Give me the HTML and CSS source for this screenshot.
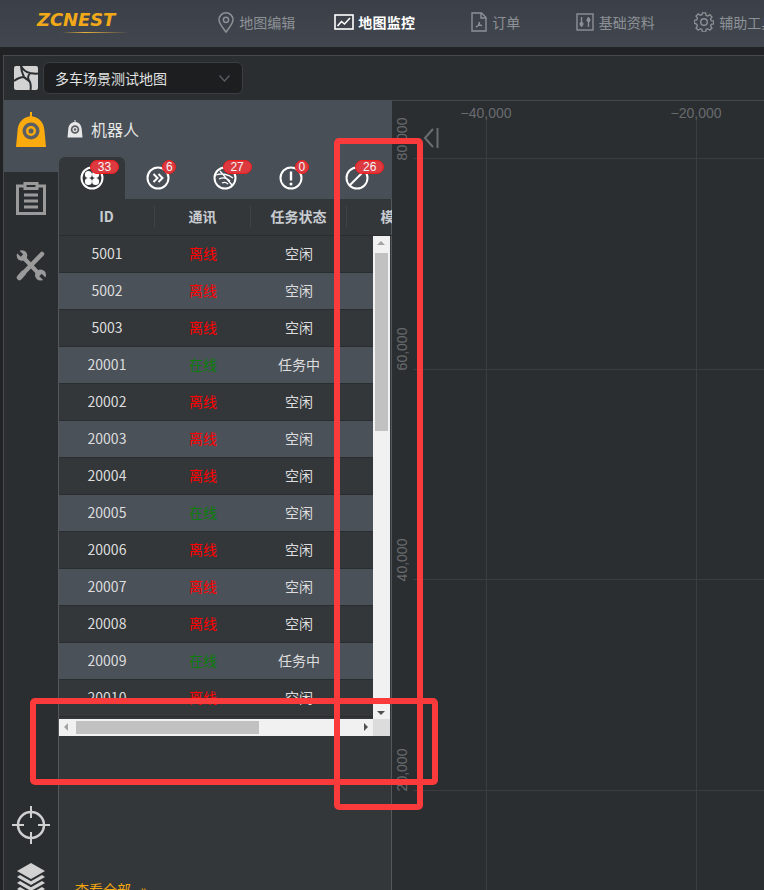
FILE: index.html
```html
<!DOCTYPE html>
<html lang="zh-CN">
<head>
<meta charset="utf-8">
<title>地图监控</title>
<link rel="stylesheet" href="styles.css">
</head>
<body>
<svg class="defs" width="0" height="0" aria-hidden="true">
  <symbol id="robot" viewBox="0 0 30 36">
    <path fill="currentColor" d="M14 0h2v4.200C24 5.500 28 11 28.500 19L30 35H0L1.500 19C2 11 6 5.500 14 4.200Z"/>
    <circle cx="15" cy="19" r="8.500" fill="#5b5f63"/>
    <circle cx="15" cy="19" r="5" fill="currentColor"/>
    <circle cx="15" cy="19" r="2.500" fill="#5b5f63"/>
  </symbol>
</svg>

<header class="topbar">
  <div class="logo">
    <span class="logo-text">ZCNEST</span>
    <span class="logo-line"></span>
  </div>
  <nav class="nav">
    <a class="nav-item">
      <svg width="16" height="21" viewBox="0 0 16 21" fill="none" stroke="currentColor" stroke-width="1.500"><path d="M8 20C4 14.500 1 11.500 1 7.800a7 7 0 0 1 14 0C15 11.500 12 14.500 8 20Z"/><circle cx="8" cy="7.800" r="2.600"/></svg>
      地图编辑
    </a>
    <a class="nav-item nav-item-active">
      <svg width="20" height="18" viewBox="0 0 20 18" fill="none" stroke="currentColor" stroke-width="1.600"><rect x="1" y="2" width="18" height="14"/><path d="M3.500 13l4-4.500 3 2.500 5.500-6"/></svg>
      地图监控
    </a>
    <a class="nav-item">
      <svg width="16" height="20" viewBox="0 0 16 20" fill="none" stroke="currentColor" stroke-width="1.400"><path d="M1 1h9.500L15 5.500V19H1Z"/><path d="M10 1v5h5M5 15c2-1 3.500-3 3.500-5M5 15l3-2 3 .5"/></svg>
      订单
    </a>
    <a class="nav-item">
      <svg width="18" height="18" viewBox="0 0 18 18" fill="none" stroke="currentColor" stroke-width="1.400"><rect x="1" y="1" width="16" height="16"/><path d="M5.500 4v10M12.500 4v10"/><circle cx="5.500" cy="11" r="1.400" fill="currentColor"/><circle cx="12.500" cy="7" r="1.400" fill="currentColor"/></svg>
      基础资料
    </a>
    <a class="nav-item">
      <svg width="20" height="20" viewBox="0 0 20 20" fill="none" stroke="currentColor" stroke-width="1.400"><path d="M8.300 1h3.400l.5 2.600 1.700.7 2.200-1.500 2.300 2.400-1.500 2.100.7 1.700 2.600.5v3l-2.600.5-.7 1.700 1.500 2.200-2.300 2.300-2.200-1.500-1.700.7-.5 2.600H8.300l-.5-2.600-1.700-.7-2.200 1.500-2.300-2.300 1.500-2.200-.7-1.700L-.2 11.700v-3l2.600-.5.7-1.700-1.500-2.100L3.900 2l2.200 1.500 1.700-.7Z" transform="translate(.5 0) scale(.95)"/><circle cx="10" cy="10" r="3.300"/></svg>
      辅助工具
    </a>
  </nav>
</header>

<main class="frame">
  <div class="toolbar">
    <svg class="map-mark" width="24" height="24" viewBox="0 0 24 24"><rect width="24" height="24" rx="2" fill="#d2d2d2"/><path d="M7 0c2 4 4 6 9 7 3 .5 5 1 8 .5M16 7c-2 3-3 5 0 9 1 3 1 5 .5 8M10 11c-3 0-6 1-10 4M10 11c2 2 4 3 6 5M7 0c0 3 0 5 3 11" fill="none" stroke="#2b2e31" stroke-width="2"/></svg>
    <div class="select">
      <span>多车场景测试地图</span>
      <svg width="11" height="7" viewBox="0 0 11 7" fill="none" stroke="#5c6064" stroke-width="1.200"><path d="M.5.500l5 5.500 5-5.500"/></svg>
    </div>
  </div>

  <div class="work">
    <aside class="rail">
      <div class="rail-item rail-item-active">
        <svg class="rail-robot" width="30" height="36"><use href="#robot"/></svg>
      </div>
      <div class="rail-item rail-item-clip">
        <svg width="30" height="33" viewBox="0 0 30 33" fill="none" stroke="#9a9a9a" stroke-width="3"><path d="M9 4H1.500v27.500h27V4H21"/><rect x="9" y="1.500" width="12" height="5"/><path d="M8 13h14M8 19h14M8 25h14"/></svg>
      </div>
      <div class="rail-item rail-item-tools">
        <svg width="30" height="31" viewBox="0 0 30 31" fill="none" stroke="#9a9a9a" stroke-linecap="round"><path d="M26 4L8 22.500" stroke-width="4.500"/><path d="M7 23.500L3.500 27.500" stroke-width="5.500"/><path d="M6 6L24 25" stroke-width="4"/><circle cx="6" cy="5.500" r="5.300" fill="#9a9a9a" stroke="none"/><circle cx="24.500" cy="25" r="5.500" fill="#9a9a9a" stroke="none"/><path d="M0 0l6 5.500M30 30.500l-5.500-5.500" stroke="#2b2e31" stroke-width="3.500" stroke-linecap="butt"/></svg>
      </div>
      <div class="rail-bottom">
        <svg width="38" height="38" viewBox="0 0 38 38" fill="none" stroke="#d0d0d0" stroke-width="2.500"><circle cx="19" cy="19" r="13"/><path d="M19 0v12M19 26v12M0 19h12M26 19h12" stroke-width="2"/></svg>
        <svg width="30" height="33" viewBox="0 0 30 33" fill="#d2d2d2"><path d="M15 0l14 8-14 8L1 8Z"/><path d="M4 12l11 6.300L26 12l3 2-14 8L1 14Z"/><path d="M4 18l11 6.300L26 18l3 2-14 8L1 20Z"/><path d="M4 24l11 6.300L26 24l3 2-14 8L1 26Z"/></svg>
      </div>
    </aside>

    <section class="panel">
      <div class="panel-head">
        <h2 class="panel-title">
          <svg class="title-robot" width="16" height="18"><use href="#robot"/></svg>
          机器人
        </h2>
        <div class="tabs">
          <div class="tab tab-active">
            <svg class="tab-icon" width="24" height="24" viewBox="0 0 24 24" fill="none" stroke="#fff" stroke-width="2"><circle cx="12" cy="12" r="10.500"/><g fill="#fff" stroke="none"><circle cx="8.400" cy="8.400" r="3.500"/><circle cx="15.600" cy="8.400" r="3.500"/><circle cx="8.400" cy="15.600" r="3.500"/><circle cx="15.600" cy="15.600" r="3.500"/></g></svg>
            <span class="badge">33</span>
          </div>
          <div class="tab">
            <svg class="tab-icon" width="24" height="24" viewBox="0 0 24 24" fill="none" stroke="#fff" stroke-width="2"><circle cx="12" cy="12" r="10.500"/><path d="M7.500 8l4 4-4 4M12.500 8l4 4-4 4"/></svg>
            <span class="badge badge-one">6</span>
          </div>
          <div class="tab">
            <svg class="tab-icon" width="24" height="24" viewBox="0 0 24 24" fill="none" stroke="#fff" stroke-width="2"><circle cx="12" cy="12" r="10.500"/><path d="M3 9c5-2 12-1 17 3M6 13c4-2 8-1 11 2M9 17c2-1 4-1 6 1M7 5l12 14" stroke-width="1.300"/></svg>
            <span class="badge">27</span>
          </div>
          <div class="tab">
            <svg class="tab-icon" width="24" height="24" viewBox="0 0 24 24" fill="none" stroke="#fff" stroke-width="2"><circle cx="12" cy="12" r="10.500"/><path d="M12 5.500v9" stroke-width="2.400"/><circle cx="12" cy="18" r="1.500" fill="#fff" stroke="none"/></svg>
            <span class="badge badge-one">0</span>
          </div>
          <div class="tab">
            <svg class="tab-icon" width="24" height="24" viewBox="0 0 24 24" fill="none" stroke="#fff" stroke-width="2"><circle cx="12" cy="12" r="10.500"/><path d="M4.500 19.500l15-15"/></svg>
            <span class="badge">26</span>
          </div>
        </div>
      </div>

      <div class="panel-body">
        <div class="grid">
          <table class="data data-head">
            <tr><th>ID</th><th>通讯</th><th>任务状态</th><th>模式</th></tr>
          </table>
          <div class="rows">
            <table class="data">
              <tr><td>5001</td><td class="off">离线</td><td>空闲</td><td></td></tr>
              <tr><td>5002</td><td class="off">离线</td><td>空闲</td><td></td></tr>
              <tr><td>5003</td><td class="off">离线</td><td>空闲</td><td></td></tr>
              <tr><td>20001</td><td class="on">在线</td><td>任务中</td><td></td></tr>
              <tr><td>20002</td><td class="off">离线</td><td>空闲</td><td></td></tr>
              <tr><td>20003</td><td class="off">离线</td><td>空闲</td><td></td></tr>
              <tr><td>20004</td><td class="off">离线</td><td>空闲</td><td></td></tr>
              <tr><td>20005</td><td class="on">在线</td><td>空闲</td><td></td></tr>
              <tr><td>20006</td><td class="off">离线</td><td>空闲</td><td></td></tr>
              <tr><td>20007</td><td class="off">离线</td><td>空闲</td><td></td></tr>
              <tr><td>20008</td><td class="off">离线</td><td>空闲</td><td></td></tr>
              <tr><td>20009</td><td class="on">在线</td><td>任务中</td><td></td></tr>
              <tr><td>20010</td><td class="off">离线</td><td>空闲</td><td></td></tr>
            </table>
          </div>
          <div class="vscroll">
            <span class="arrow arrow-up"></span>
            <span class="vthumb"></span>
            <span class="arrow arrow-down"></span>
          </div>
          <div class="hscroll">
            <span class="arrow arrow-left"></span>
            <span class="hthumb"></span>
            <span class="arrow arrow-right"></span>
          </div>
          <div class="corner"></div>
        </div>
        <a class="more">查看全部 &nbsp;&nbsp;»</a>
      </div>
    </section>

    <section class="map">
      <svg class="map-canvas" width="372" height="790" viewBox="392 100 372 790">
        <g stroke="#3a3d41" stroke-width="1">
          <path d="M486.500 120V890M696.500 120V890"/>
          <path d="M413 158.500H764M413 369.500H764M413 579.500H764M413 790.500H764"/>
        </g>
        <g class="axis">
          <text x="486" y="118" text-anchor="middle">−40,000</text>
          <text x="696" y="118" text-anchor="middle">−20,000</text>
          <text transform="translate(407 139) rotate(-90)" text-anchor="middle">80,000</text>
          <text transform="translate(407 349) rotate(-90)" text-anchor="middle">60,000</text>
          <text transform="translate(407 560) rotate(-90)" text-anchor="middle">40,000</text>
          <text transform="translate(407 770) rotate(-90)" text-anchor="middle">20,000</text>
        </g>
        <path d="M433 129l-8 9 8 9" fill="none" stroke="#6a6d70" stroke-width="2"/>
        <path d="M437.500 128v20" stroke="#6a6d70" stroke-width="2"/>
      </svg>
    </section>
  </div>
</main>

<div class="mark mark-v"></div>
<div class="mark mark-h"></div>
</body>
</html>
```

FILE: styles.css
```css
* { box-sizing: border-box; }

html, body {
  margin: 0;
  height: 890px;
  overflow: hidden;
}

body {
  position: relative;
  width: 764px;
  background: #202224;
  color: #ddd;
  font-family: "Noto Sans CJK SC", "Liberation Sans", sans-serif;
  font-size: 14px;
}

.defs { position: absolute; }

/* top bar */
.topbar {
  display: flex;
  height: 47px;
  background: linear-gradient(#3b4048, #42474f);
  overflow: hidden;
}

.logo {
  position: relative;
  flex: none;
  width: 197px;
  padding: 9px 0 0 37px;
}

.logo-text {
  display: block;
  font-family: "DejaVu Sans", sans-serif;
  font-size: 18px;
  line-height: 22px;
  font-weight: 700;
  font-style: italic;
  letter-spacing: -.1px;
  color: #f1a91a;
}

.logo-line {
  display: block;
  width: 66px;
  height: 1px;
  margin: 1px 0 0 25px;
  background: linear-gradient(90deg, transparent, #e6b13a 35%, transparent);
}

.nav {
  display: flex;
  flex: none;
}

.nav-item {
  display: flex;
  flex: none;
  align-items: center;
  justify-content: center;
  gap: 5px;
  width: 119.500px;
  padding-bottom: 3px;
  color: #8d9196;
  white-space: nowrap;
}

.nav-item svg { flex: none; }

.nav-item-active {
  gap: 4px;
  padding-right: 3px;
  color: #fff;
  font-weight: 700;
  letter-spacing: .3px;
}

/* frame */
.frame {
  display: flex;
  flex-direction: column;
  margin: 8px 0 0 3px;
  border-left: 1px solid #484b4e;
  border-top: 1px solid #484b4e;
}

.toolbar {
  display: flex;
  align-items: center;
  gap: 5px;
  height: 44px;
  padding-left: 10px;
  background: #2b2e31;
}

.select {
  display: flex;
  align-items: center;
  justify-content: space-between;
  width: 200px;
  height: 32px;
  padding: 0 12px 0 11px;
  border: 1px solid #3b3e41;
  border-radius: 6px;
  background: #1c1e20;
  color: #e2e2e2;
}

.work {
  display: flex;
  height: 790px;
}

/* left rail */
.rail {
  display: flex;
  flex: none;
  flex-direction: column;
  align-items: stretch;
  width: 54px;
  background: #2b2e31;
}

.rail-item {
  display: flex;
  justify-content: center;
}

.rail-item-active {
  height: 72px;
  padding-top: 12px;
  background: #484f56;
  color: #fbab0e;
}

.rail-item-clip { height: 78px; padding-top: 10px; }

.rail-bottom {
  display: flex;
  flex-direction: column;
  align-items: center;
  gap: 19px;
  height: 85px;
  margin-top: auto;
  padding-top: 1px;
}

.rail-bottom svg { flex: none; }

/* panel */
.panel {
  display: flex;
  flex: none;
  flex-direction: column;
  width: 334px;
  background: #33373a;
  overflow: hidden;
}

.panel-head {
  flex: none;
  height: 99px;
  background: #484f56;
}

.panel-title {
  display: flex;
  align-items: center;
  gap: 8px;
  height: 57px;
  margin: 0;
  padding: 0 0 0 9px;
  color: #e6e6e6;
  font-size: 16px;
  font-weight: 400;
  line-height: 1;
}

.title-robot { color: #e8e8e8; }

.tabs {
  display: flex;
  height: 42px;
  margin-left: 1px;
}

.tab {
  position: relative;
  flex: none;
  width: 66.300px;
  padding: 9px 0 0 21px;
}

.tab-icon { display: block; }

.tab-active {
  border-radius: 6px 6px 0 0;
  background: #33373a;
}

.badge {
  position: absolute;
  top: 3px;
  left: 31px;
  min-width: 29px;
  height: 14px;
  padding: 0 4px;
  border: 1px solid #f01c1c;
  border-radius: 7px;
  background: #dc3a40;
  color: #f5f5f5;
  font-family: "Liberation Sans", sans-serif;
  font-size: 12px;
  line-height: 12px;
  text-align: center;
}

.badge-one {
  left: 37px;
  min-width: 14px;
  padding: 0;
}

.panel-body {
  flex: 1;
  border-left: 1px solid #55585b;
  border-right: 1px solid #55585b;
  min-height: 0;
}

.grid {
  display: grid;
  grid-template-columns: 314px 17px;
  grid-template-rows: 37px 483px 17px;
  width: 331px;
}

.data-head { grid-column: 1 / 3; }

.data {
  width: 384px;
  table-layout: fixed;
  border-collapse: separate;
  border-spacing: 0;
}

.data th, .data td {
  height: 37px;
  padding: 0 0 2px;
  text-align: center;
  vertical-align: middle;
  border-bottom: 1px solid #2a2d2f;
}

.data th {
  position: relative;
  padding-right: 1px;
  color: #c8ccd0;
  font-size: 14px;
  font-weight: 700;
}

.data th + th::before {
  content: "";
  position: absolute;
  left: -1px;
  top: 7px;
  bottom: 8px;
  border-left: 1px solid #3f4346;
}

.data tr:nth-child(even) td { background: #4a5159; }

.rows {
  height: 483px;
  overflow: hidden;
}

.off { color: #f00; }
.on { color: #0a7d0a; }

.vscroll, .hscroll {
  position: relative;
  background: #f1f1f1;
}

.vthumb {
  position: absolute;
  left: 2px;
  top: 17px;
  width: 13px;
  height: 178px;
  background: #c1c1c1;
}

.hthumb {
  position: absolute;
  left: 17px;
  top: 2px;
  width: 183px;
  height: 13px;
  background: #c1c1c1;
}

.corner { background: #dcdcdc; }

.arrow {
  position: absolute;
  width: 0;
  height: 0;
  border: 4px solid transparent;
}

.arrow-up { left: 4px; top: 5px; border-top-width: 0; border-bottom: 4px solid #a3a3a3; }
.arrow-down { left: 4px; bottom: 4px; border-bottom-width: 0; border-top: 4px solid #505050; }
.arrow-left { left: 5px; top: 4px; border-left-width: 0; border-right: 4px solid #a3a3a3; }
.arrow-right { right: 5px; top: 4px; border-right-width: 0; border-left: 4px solid #505050; }

.more {
  display: block;
  margin: 143px 0 0 16px;
  color: #f5a70f;
  line-height: 20px;
  white-space: nowrap;
}

/* map */
.map {
  flex: 1;
  min-width: 0;
  margin-left: 0;
  background: #2b2e31;
  border-top: 1px solid #44474c;
}

.map-canvas {
  display: block;
  margin-top: -1px;
}

.axis text {
  fill: #686b6e;
  font-family: "Liberation Sans", sans-serif;
  font-size: 14px;
}

/* red review marks drawn over the screenshot */
.mark {
  position: absolute;
  border: 6px solid #fb3b3b;
  border-radius: 5px;
}

.mark-v { left: 334px; top: 138px; width: 89px; height: 672px; }
.mark-h { left: 30px; top: 698px; width: 408px; height: 87px; }
```
